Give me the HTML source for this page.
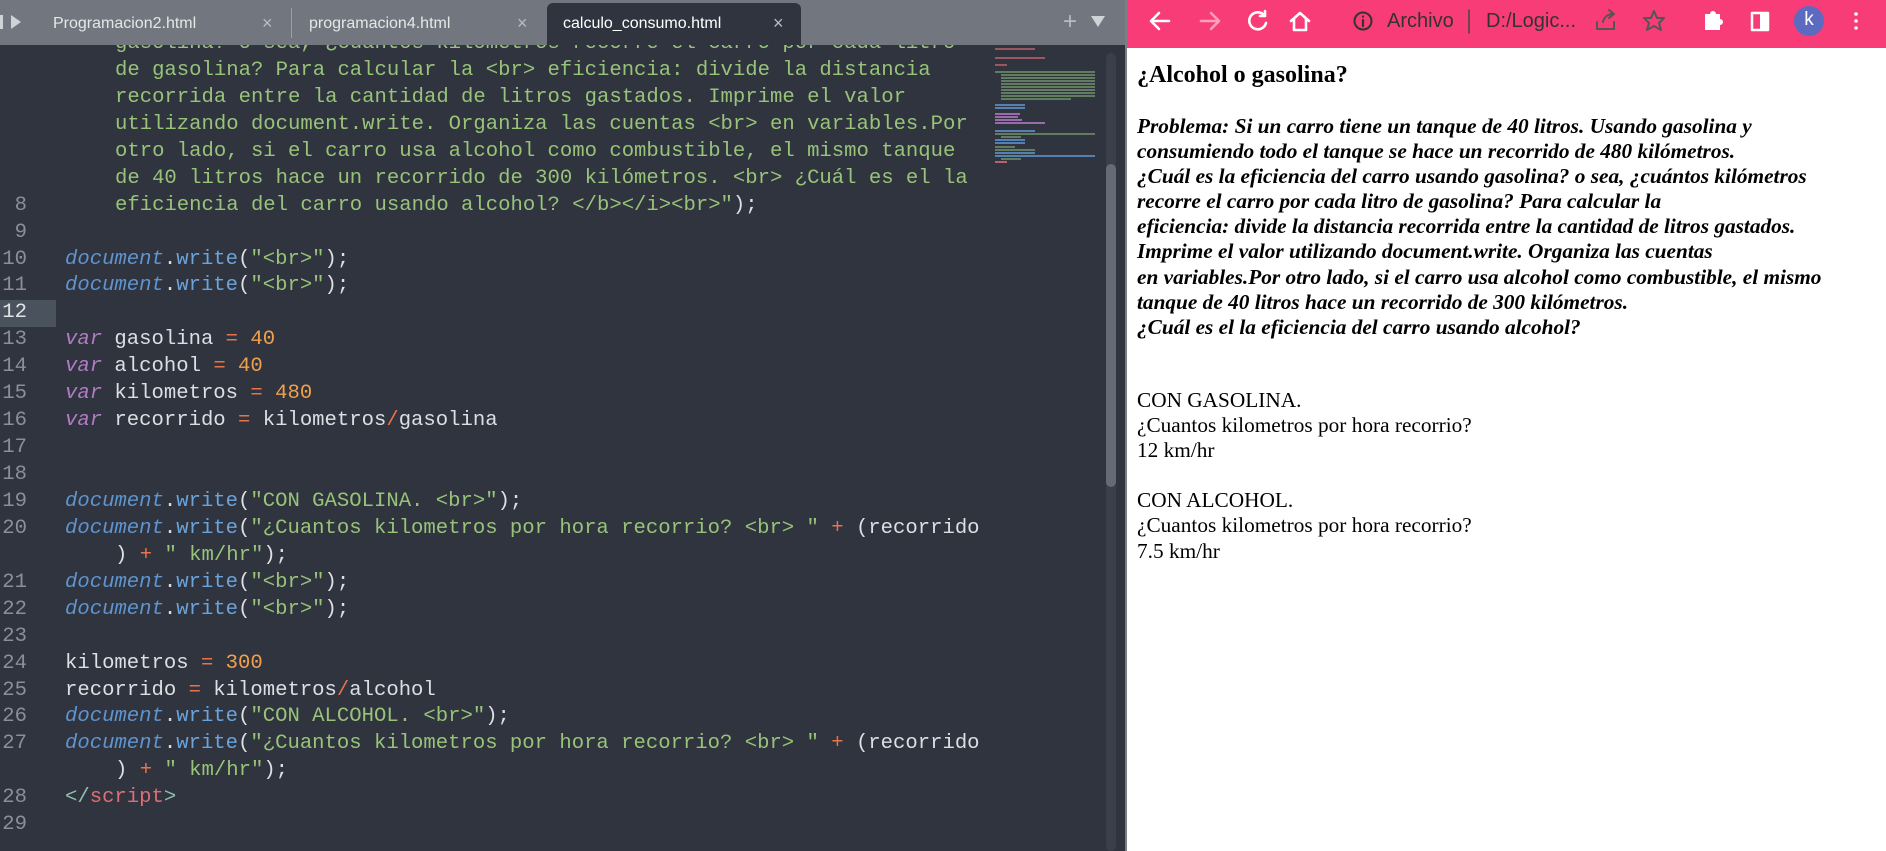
<!DOCTYPE html>
<html><head><meta charset="utf-8"><style>
*{margin:0;padding:0;box-sizing:border-box}
body{width:1886px;height:851px;overflow:hidden;position:relative;background:#fff;font-family:"Liberation Sans",sans-serif}
#ed{position:absolute;left:0;top:0;width:1126px;height:851px;background:#2f343e;overflow:hidden}
#code{position:absolute;left:0;top:31px;font-family:"Liberation Mono",monospace;font-size:20.6px;line-height:26.95px;color:#dcdfe4}
.r{position:relative;height:26.95px;white-space:nowrap}
.r span{white-space:pre}
.n{position:absolute;left:0;width:27px;text-align:right;color:#8a9099}
.c{position:absolute;left:65px}
.w{position:absolute;left:115px}
.s{color:#98c379}.d{color:#5f94cf;font-style:italic}.f{color:#6ba3db}.v{color:#b27ac4;font-style:italic}.o{color:#e8734a}.m{color:#f0a04b}.t{color:#e06c75}.g{color:#8fc0b0}
#hl{position:absolute;left:0;top:300px;width:56px;height:27px;background:#4a535d}
#tabs{position:absolute;left:0;top:0;width:1126px;height:45px;background:#72777f;color:#e6e6e6;font-size:16px}
.tab{position:absolute;top:15px}
#act{position:absolute;left:547px;top:3px;width:254px;height:42px;background:#2f343e;border-radius:6px 6px 0 0}
#sb{position:absolute;left:1106px;top:53px;width:10px;height:798px;background:#3a404a;border-radius:5px}
#th{position:absolute;left:1106px;top:164px;width:10px;height:323px;background:#656b74;border-radius:5px}
#div{position:absolute;left:1125px;top:0;width:2px;height:851px;background:#7a7f86}
#tb{position:absolute;left:1127px;top:0;width:759px;height:48px;background:#f83c78}
#omni{position:absolute;left:1336px;top:5px;width:345px;height:38px;background:#fc6b96;border-radius:19px}
#pg{position:absolute;left:1137px;top:50px;font-family:"Liberation Serif",serif;color:#000;font-size:21.3px;line-height:25.1px}
</style></head><body>
<div id="ed">
<div id="hl"></div>
<div id="code"><div class="r"><span class="w s">gasolina? o sea, ¿cuántos kilómetros recorre el carro por cada litro</span></div><div class="r"><span class="w s">de gasolina? Para calcular la &lt;br&gt; eficiencia: divide la distancia</span></div><div class="r"><span class="w s">recorrida entre la cantidad de litros gastados. Imprime el valor</span></div><div class="r"><span class="w s">utilizando document.write. Organiza las cuentas &lt;br&gt; en variables.Por</span></div><div class="r"><span class="w s">otro lado, si el carro usa alcohol como combustible, el mismo tanque</span></div><div class="r"><span class="w s">de 40 litros hace un recorrido de 300 kilómetros. &lt;br&gt; ¿Cuál es el la</span></div><div class="r"><span class="n">8</span><span class="w"><span class="s">eficiencia del carro usando alcohol? &lt;/b&gt;&lt;/i&gt;&lt;br&gt;"</span>);</span></div><div class="r"><span class="n">9</span></div><div class="r"><span class="n">10</span><span class="c"><span class="d">document</span>.<span class="f">write</span>(<span class="s">"&lt;br&gt;"</span>);</span></div><div class="r"><span class="n">11</span><span class="c"><span class="d">document</span>.<span class="f">write</span>(<span class="s">"&lt;br&gt;"</span>);</span></div><div class="r"><span class="n" style="color:#e0e3e8">12</span></div><div class="r"><span class="n">13</span><span class="c"><span class="v">var</span> gasolina <span class="o">=</span> <span class="m">40</span></span></div><div class="r"><span class="n">14</span><span class="c"><span class="v">var</span> alcohol <span class="o">=</span> <span class="m">40</span></span></div><div class="r"><span class="n">15</span><span class="c"><span class="v">var</span> kilometros <span class="o">=</span> <span class="m">480</span></span></div><div class="r"><span class="n">16</span><span class="c"><span class="v">var</span> recorrido <span class="o">=</span> kilometros<span class="o">/</span>gasolina</span></div><div class="r"><span class="n">17</span></div><div class="r"><span class="n">18</span></div><div class="r"><span class="n">19</span><span class="c"><span class="d">document</span>.<span class="f">write</span>(<span class="s">"CON GASOLINA. &lt;br&gt;"</span>);</span></div><div class="r"><span class="n">20</span><span class="c"><span class="d">document</span>.<span class="f">write</span>(<span class="s">"¿Cuantos kilometros por hora recorrio? &lt;br&gt; "</span> <span class="o">+</span> (recorrido</span></div><div class="r"><span class="w">) <span class="o">+</span> <span class="s">" km/hr"</span>);</span></div><div class="r"><span class="n">21</span><span class="c"><span class="d">document</span>.<span class="f">write</span>(<span class="s">"&lt;br&gt;"</span>);</span></div><div class="r"><span class="n">22</span><span class="c"><span class="d">document</span>.<span class="f">write</span>(<span class="s">"&lt;br&gt;"</span>);</span></div><div class="r"><span class="n">23</span></div><div class="r"><span class="n">24</span><span class="c">kilometros <span class="o">=</span> <span class="m">300</span></span></div><div class="r"><span class="n">25</span><span class="c">recorrido <span class="o">=</span> kilometros<span class="o">/</span>alcohol</span></div><div class="r"><span class="n">26</span><span class="c"><span class="d">document</span>.<span class="f">write</span>(<span class="s">"CON ALCOHOL. &lt;br&gt;"</span>);</span></div><div class="r"><span class="n">27</span><span class="c"><span class="d">document</span>.<span class="f">write</span>(<span class="s">"¿Cuantos kilometros por hora recorrio? &lt;br&gt; "</span> <span class="o">+</span> (recorrido</span></div><div class="r"><span class="w">) <span class="o">+</span> <span class="s">" km/hr"</span>);</span></div><div class="r"><span class="n">28</span><span class="c"><span class="g">&lt;/</span><span class="t">script</span><span class="g">&gt;</span></span></div><div class="r"><span class="n">29</span></div></div>
<svg style="position:absolute;left:995px;top:48px" width="102" height="105">
<g fill="#6f8f6a" opacity=".8">
<rect x="0" y="0" width="40" height="2" fill="#b5606a"/>
<rect x="0" y="9" width="50" height="2" fill="#b5606a"/>
<rect x="0" y="16" width="12" height="2" fill="#b5606a"/>
<rect x="0" y="23" width="100" height="2"/><rect x="6" y="26" width="94" height="2"/><rect x="6" y="29" width="94" height="2"/><rect x="6" y="32" width="94" height="2"/><rect x="6" y="35" width="94" height="2"/><rect x="6" y="38" width="94" height="2"/><rect x="6" y="41" width="94" height="2"/><rect x="6" y="44" width="94" height="2"/><rect x="6" y="47" width="94" height="2"/><rect x="6" y="50" width="70" height="2"/>
<rect x="0" y="56" width="30" height="2" fill="#5f94cf"/><rect x="0" y="59" width="30" height="2" fill="#5f94cf"/>
<rect x="0" y="65" width="25" height="2" fill="#b27ac4"/><rect x="0" y="68" width="23" height="2" fill="#b27ac4"/><rect x="0" y="71" width="27" height="2" fill="#b27ac4"/><rect x="0" y="74" width="50" height="2" fill="#b27ac4"/>
<rect x="0" y="82" width="40" height="2" fill="#5f94cf"/><rect x="0" y="85" width="100" height="2"/><rect x="6" y="88" width="20" height="2"/><rect x="0" y="91" width="30" height="2" fill="#5f94cf"/><rect x="0" y="94" width="30" height="2" fill="#5f94cf"/>
</g></svg>
<svg style="position:absolute;left:995px;top:146px" width="102" height="30"><g fill="#6f8f6a" opacity=".8"><rect x="0" y="0" width="20" height="2"/><rect x="0" y="3" width="40" height="2"/><rect x="0" y="6" width="40" height="2" fill="#5f94cf"/><rect x="0" y="9" width="100" height="2" fill="#5f94cf"/><rect x="6" y="12" width="20" height="2"/><rect x="0" y="15" width="12" height="2" fill="#e06c75"/></g></svg>
<div id="sb"></div><div id="th"></div>
</div>
<div id="tabs">
<svg style="position:absolute;left:0;top:13px" width="26" height="20"><rect x="0" y="2" width="3" height="14" fill="#cfd2d6"/><path d="M11 2 L21 9 L11 16 Z" fill="#cfd2d6"/></svg>
<span class="tab" style="left:53px">Programacion2.html</span>
<span class="tab" style="left:262px;color:#b8bcc2;font-size:18px;top:13px">×</span>
<div style="position:absolute;left:291px;top:8px;width:1px;height:30px;background:#9ba0a6"></div>
<span class="tab" style="left:309px">programacion4.html</span>
<span class="tab" style="left:517px;color:#b8bcc2;font-size:18px;top:13px">×</span>
<div id="act"></div>
<span class="tab" style="left:563px;color:#fff">calculo_consumo.html</span>
<span class="tab" style="left:773px;color:#b8bcc2;font-size:18px;top:13px">×</span>
<span class="tab" style="left:1063px;color:#b8bcc2;font-size:24px;top:8px">+</span>
<svg style="position:absolute;left:1090px;top:15px" width="16" height="14"><path d="M1 1 L15 1 L8 12 Z" fill="#cfd2d6"/></svg>
</div>
<div id="div"></div>
<div id="tb">
<div id="omni"></div>
<svg style="position:absolute;left:0;top:0" width="759" height="48" fill="none" stroke="#fff" stroke-width="2.6" stroke-linecap="round" stroke-linejoin="round">
<path d="M42 21 H25 M32 13 L24 21 L32 29"/>
<path d="M74 21 H91 M84 13 L92 21 L84 29" stroke="#fca0bd"/>
<path d="M137 15 A8.5 8.5 0 1 0 139 23 M138 11 V16 H133"/>
<path d="M164 21 L173 13 L182 21 M167 19 V30 H179 V19"/>
<circle cx="236" cy="21" r="8.5" stroke="#333" stroke-width="2"/><path d="M236 20 V26 M236 16.5 V16.6" stroke="#333" stroke-width="2.2"/>
<path d="M342 10 V33" stroke="#444" stroke-width="1.5"/>
<path d="M470 22 V29 H487 V22 M476 22 C477 17 481 14 486 14 M482 10 L487 14 L482 18" stroke="#555" stroke-width="2"/>
<path d="M527 11 L530 18 L537 18 L532 23 L534 30 L527 26 L520 30 L522 23 L517 18 L524 18 Z" stroke="#555" stroke-width="2"/>
<path d="M578 14 H583 A3 3 0 0 1 589 14 H593 V19 A3 3 0 0 1 593 25 V30 H578 Z" fill="#fff" stroke="none"/>
<rect x="625" y="13" width="16" height="17" stroke-width="2.5"/><rect x="633" y="13" width="8" height="17" fill="#fff" stroke="none"/>
<circle cx="729" cy="14" r="1.8" fill="#fff" stroke="none"/><circle cx="729" cy="21" r="1.8" fill="#fff" stroke="none"/><circle cx="729" cy="28" r="1.8" fill="#fff" stroke="none"/>
</svg>
<div style="position:absolute;left:667px;top:6px;width:30px;height:30px;border-radius:15px;background:#5c6bc0;color:#fff;font-size:19px;text-align:center;line-height:28px">k</div>
<span style="position:absolute;left:260px;top:10px;font-size:20px;color:#333">Archivo</span>
<span style="position:absolute;left:359px;top:10px;font-size:20px;color:#333">D:/Logic...</span>
</div>
<div id="pg">
<div style="font-weight:bold;font-size:24px;position:absolute;top:13px;white-space:nowrap">¿Alcohol o gasolina?</div>
<div style="position:absolute;top:64px;font-weight:bold;font-style:italic;white-space:nowrap">Problema: Si un carro tiene un tanque de 40 litros. Usando gasolina y<br>consumiendo todo el tanque se hace un recorrido de 480 kilómetros.<br>¿Cuál es la eficiencia del carro usando gasolina? o sea, ¿cuántos kilómetros<br>recorre el carro por cada litro de gasolina? Para calcular la<br>eficiencia: divide la distancia recorrida entre la cantidad de litros gastados.<br>Imprime el valor utilizando document.write. Organiza las cuentas<br>en variables.Por otro lado, si el carro usa alcohol como combustible, el mismo<br>tanque de 40 litros hace un recorrido de 300 kilómetros.<br>¿Cuál es el la eficiencia del carro usando alcohol?</div>
<div style="position:absolute;top:338px;white-space:nowrap">CON GASOLINA.<br>¿Cuantos kilometros por hora recorrio?<br>12 km/hr<br><br>CON ALCOHOL.<br>¿Cuantos kilometros por hora recorrio?<br>7.5 km/hr</div>
</div>
</body></html>
